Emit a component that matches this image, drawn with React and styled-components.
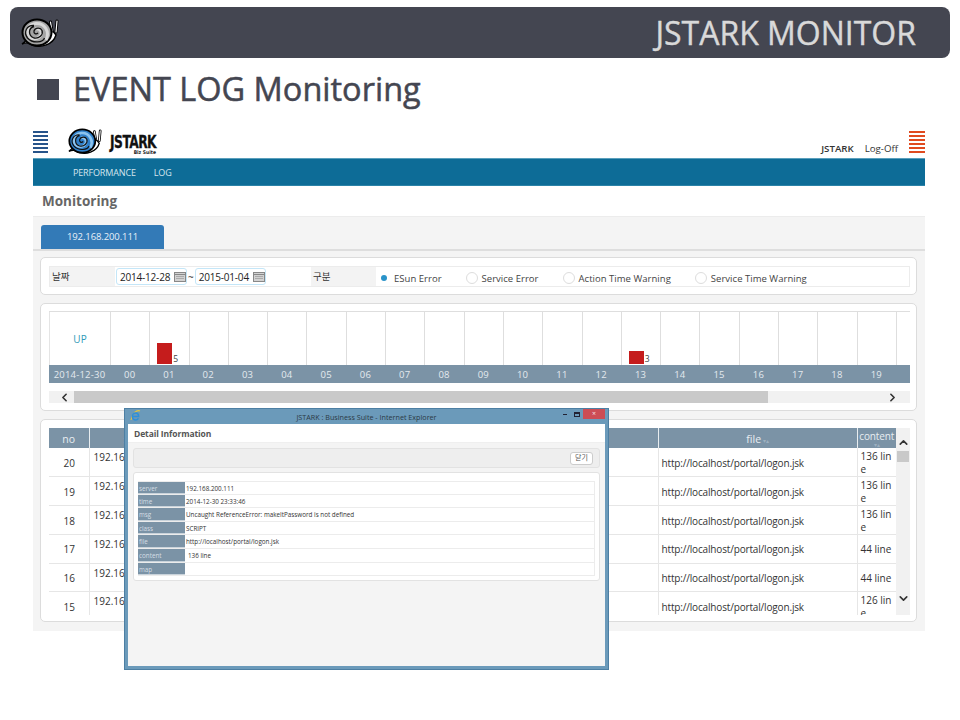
import React from "react";
import styled, { createGlobalStyle } from "styled-components";
import { ChevronLeft, ChevronRight, ChevronUp, ChevronDown } from "lucide-react";

const FONT = `"Open Sans", "Noto Sans", "Noto Sans CJK KR", sans-serif`;
const SLATE = "#7b93a6";

const GlobalStyle = createGlobalStyle`
  html, body {
    margin: 0;
    padding: 0;
    background: #fff;
    font-family: ${FONT};
  }
`;

const Page = styled.div`
  position: relative;
  width: 960px;
  height: 720px;
  overflow: hidden;
  padding-top: 7px;
  box-sizing: border-box;
`;

const TopBar = styled.header`
  margin: 0 10px;
  height: 51px;
  padding: 0 34px 0 11px;
  border-radius: 8px;
  background: #444651;
  display: flex;
  align-items: center;
  justify-content: space-between;
`;

const TopTitle = styled.div`
  color: #d9d9d9;
  font-size: 32px;
  line-height: 51px;
  -webkit-text-stroke: 0.4px #d9d9d9;
`;

const PageHeading = styled.h1`
  margin: 8px 0 0 37px;
  height: 44px;
  padding-bottom: 2px;
  display: flex;
  align-items: center;
  gap: 14px;
  color: #444651;
  font-size: 32.5px;
  font-weight: 400;
  -webkit-text-stroke: 0.5px #444651;
`;

const HeadingMark = styled.span`
  width: 22px;
  height: 21px;
  margin-top: 2px;
  background: #444651;
`;

const Frame = styled.div`
  margin: 13px 0 0 33px;
  width: 892px;
`;

const AppHeader = styled.div`
  height: 33px;
  display: flex;
  align-items: flex-start;
`;

const Burger = styled.div`
  width: ${(p) => p.$width}px;
  height: 22px;
  margin-top: 6px;
  background: repeating-linear-gradient(
    to bottom,
    ${(p) => p.$color} 0 2px,
    #fff 2px 4px
  );
`;

const Brand = styled.div`
  margin: 3px 0 0 20px;
  display: flex;
  gap: 8px;
`;

const BrandText = styled.div`
  width: 46px;
  margin-top: 5px;
  display: flex;
  flex-direction: column;
  align-items: flex-end;
`;

const BrandName = styled.span`
  align-self: flex-start;
  transform: scaleX(0.76);
  transform-origin: left center;
  font-family: "DejaVu Sans Condensed", "DejaVu Sans", sans-serif;
  font-weight: 700;
  font-size: 18px;
  line-height: 17px;
  color: #111;
  letter-spacing: -0.7px;
  white-space: nowrap;
  -webkit-text-stroke: 0.3px #111;
`;

const BrandSub = styled.span`
  font-family: "DejaVu Sans Condensed", sans-serif;
  font-weight: 700;
  font-size: 5px;
  line-height: 5px;
  color: #222;
`;

const UserArea = styled.div`
  margin: 17px 11px 0 auto;
  display: flex;
  gap: 11px;
  font-size: 9.7px;
  line-height: 14px;
  color: #333;
`;

const UserName = styled.span`
  font-weight: 600;
`;

const NavBar = styled.nav`
  height: 28px;
  box-sizing: border-box;
  padding-left: 40px;
  display: flex;
  align-items: center;
  gap: 18px;
  background: #0d6c97;
  border-top: 1px solid #5a9fbc;
  border-bottom: 1px solid #2b83a8;
  color: #d6e6ee;
  font-size: 9px;
  letter-spacing: -0.15px;
`;

const PageTitle = styled.div`
  height: 30px;
  padding-left: 9px;
  display: flex;
  align-items: center;
  color: #666;
  font-size: 13.5px;
  font-weight: 700;
`;

const Workspace = styled.main`
  height: 415px;
  box-sizing: border-box;
  background: #f4f4f4;
  border-top: 1px solid #ececec;
  padding-top: 8px;
`;

const TabStrip = styled.div`
  height: 24px;
  padding-left: 8px;
  border-bottom: 2px solid #dedede;
`;

const Tab = styled.div`
  width: 123px;
  height: 24px;
  border-radius: 3px 3px 0 0;
  background: #337ab7;
  color: #e8f0f7;
  font-size: 9.5px;
  line-height: 24px;
  text-align: center;
  letter-spacing: -0.1px;
`;

const Card = styled.section`
  width: 877px;
  height: ${(p) => p.$height}px;
  margin: ${(p) => p.$top}px 0 0 7px;
  box-sizing: border-box;
  padding: 8px 6px 0 8px;
  background: #fff;
  border: 1px solid #dcdcdc;
  border-radius: 5px;
`;

const FilterRow = styled.div`
  height: 21px;
  display: flex;
  border: 1px solid #ececec;
  box-sizing: border-box;
  align-items: stretch;
`;

const FilterLabel = styled.div`
  width: 65px;
  box-sizing: border-box;
  padding-left: 2px;
  background: #f3f3f3;
  color: #333;
  font-size: 9.5px;
  line-height: 20px;
`;

const DateCell = styled.div`
  width: 196px;
  box-sizing: border-box;
  padding-left: 1px;
  display: flex;
  align-items: center;
  gap: 1px;
  font-size: 10px;
  color: #333;
`;

const DateBox = styled.div`
  width: 71px;
  height: 17px;
  box-sizing: border-box;
  padding: 0 0 0 3px;
  display: flex;
  align-items: center;
  justify-content: space-between;
  border: 1px solid #c4e6f8;
  border-radius: 3px;
  color: #222;
  font-size: 10px;
  letter-spacing: -0.2px;
`;

const RadioGroup = styled.div`
  flex: 1;
  padding: 3px 0 0 2px;
  display: flex;
  align-items: center;
  gap: 24px;
`;

const RadioItem = styled.label`
  display: flex;
  align-items: center;
  gap: 4px;
  color: #444;
  font-size: 9.5px;
  letter-spacing: 0.03px;
`;

const RadioCircle = styled.span`
  width: 12px;
  height: 12px;
  box-sizing: border-box;
  border: 1px solid ${(p) => (p.$on ? "#fff" : "#ddd")};
  border-radius: 50%;
  display: flex;
  align-items: center;
  justify-content: center;
  &::after {
    content: "";
    display: ${(p) => (p.$on ? "block" : "none")};
    width: 6px;
    height: 6px;
    border-radius: 50%;
    background: #2a93c9;
  }
`;

const ChartGrid = styled.div`
  display: flex;
  height: 54px;
  box-sizing: border-box;
  margin-top: -1px;
  border-top: 1px solid #dedede;
  overflow: hidden;
`;

const ChartLabel = styled.div`
  width: 61px;
  flex: none;
  box-sizing: border-box;
  border-left: 1px solid #e4e4e4;
  color: #2f9ab8;
  font-size: 10px;
  line-height: 54px;
  text-align: center;
`;

const ChartCell = styled.div`
  width: 39.3px;
  flex: none;
  box-sizing: border-box;
  border-left: 1px solid #dedede;
  display: flex;
  align-items: flex-end;
  padding: 0 0 1px 7px;
  color: #444;
  font-size: 8.5px;
  line-height: 10px;
`;

const Bar = styled.span`
  width: 15px;
  height: ${(p) => p.$height}px;
  margin-right: 1px;
  background: #c51c1c;
`;

const HourBand = styled.div`
  display: flex;
  height: 18px;
  background: ${SLATE};
  color: #e4eaef;
  font-size: 9.5px;
  line-height: 20px;
  text-align: center;
  overflow: hidden;
  letter-spacing: 0.2px;
`;

const HourDate = styled.span`
  width: 61px;
  flex: none;
`;

const Hour = styled.span`
  width: 39.3px;
  flex: none;
`;

const HScroll = styled.div`
  height: 12px;
  margin-top: 8px;
  display: flex;
  align-items: center;
  background: #f1f1f1;
  color: #333;
`;

const ScrollButton = styled.span`
  width: 25px;
  flex: none;
  box-sizing: border-box;
  padding-left: ${(p) => p.$pad}px;
  display: flex;
`;

const HThumb = styled.div`
  width: 694px;
  height: 100%;
  margin-right: auto;
  background: #c9c9c9;
`;

const TableWrap = styled.div`
  display: flex;
  height: 187px;
  overflow: hidden;
`;

const LogTable = styled.table`
  width: 847px;
  flex: none;
  table-layout: fixed;
  border-collapse: collapse;
  align-self: flex-start;
  color: #333;
  font-size: 10px;
`;

const HeadCell = styled.th`
  height: 20px;
  box-sizing: border-box;
  padding: ${(p) => (p.$tight ? "2px 0 0" : "1px 0 0")};
  background: ${SLATE};
  border-left: 1px solid #e8edf0;
  color: #e8edf1;
  font-size: ${(p) => (p.$tight ? 10 : 10.5)}px;
  font-weight: 400;
  line-height: 12px;
  letter-spacing: ${(p) => (p.$tight ? "-0.1px" : "0")};
  overflow: hidden;
  &:first-child {
    border-left: 0;
  }
`;

const SortMark = styled.span`
  color: #9db0bf;
  font-size: 6px;
  line-height: 6px;
  letter-spacing: 0;
`;

const SortStack = styled(SortMark)`
  display: block;
`;

const Cell = styled.td`
  height: 28.67px;
  box-sizing: border-box;
  padding: ${(p) => (p.$top ? "3px 3px 0 4px" : "2px 2px 0 3px")};
  vertical-align: ${(p) => (p.$top ? "top" : "middle")};
  text-align: ${(p) => (p.$center ? "center" : "left")};
  border-left: ${(p) => (p.$open ? "0" : "1px solid #e6e6e6")};
  border-bottom: 1px solid #e6e6e6;
  line-height: 13px;
  letter-spacing: ${(p) => (p.$narrow ? "-0.16px" : "0")};
  word-break: break-all;
  &:first-child {
    border-left: 0;
  }
`;

const VScroll = styled.div`
  width: 14px;
  flex: none;
  display: flex;
  flex-direction: column;
  align-items: center;
  background: #f1f1f1;
  color: #333;
  padding-top: 8px;
  box-sizing: border-box;
`;

const VThumb = styled.div`
  width: 12px;
  height: 11px;
  margin: 2px 0 auto;
  background: #c9c9c9;
`;

const DownArrow = styled.span`
  display: flex;
  margin-bottom: 10px;
`;

const PopupWindow = styled.div`
  position: absolute;
  left: 124px;
  top: 408px;
  width: 485px;
  height: 262px;
  box-sizing: border-box;
  padding: 0 3px 3px;
  background: #6b9aba;
  border: 1px solid #4d7fa3;
  display: flex;
  flex-direction: column;
`;

const PopupBar = styled.div`
  position: relative;
  flex: none;
  height: 15px;
  display: flex;
  align-items: center;
  justify-content: center;
  color: #2b3a46;
  font-size: 7.2px;
`;

const PopupIcon = styled.span`
  position: absolute;
  left: 2px;
  top: 1px;
  display: flex;
`;

const WindowButtons = styled.div`
  position: absolute;
  right: 0;
  top: 0;
  height: 10px;
  display: flex;
  align-items: center;
`;

const WinMin = styled.span`
  width: 4px;
  height: 1px;
  margin-right: 7px;
  background: #223;
`;

const WinMax = styled.span`
  width: 6px;
  height: 5px;
  margin-right: 3px;
  border: 1px solid #223;
  border-top-width: 2px;
  box-sizing: border-box;
`;

const WinClose = styled.span`
  width: 22px;
  height: 10px;
  background: #cc4d55;
  color: #f6dfe0;
  font-size: 7px;
  line-height: 10px;
  text-align: center;
`;

const PopupBody = styled.div`
  flex: 1;
  background: #f4f4f4;
`;

const PopupHead = styled.div`
  height: 19px;
  box-sizing: border-box;
  padding-left: 6px;
  background: #fff;
  color: #555;
  font-size: 8.5px;
  font-weight: 700;
  line-height: 19px;
  letter-spacing: -0.1px;
  border-bottom: 1px solid #efefef;
`;

const PopupTools = styled.div`
  height: 20px;
  margin: 5px 5px 0;
  box-sizing: border-box;
  padding-right: 6px;
  display: flex;
  align-items: center;
  justify-content: flex-end;
  background: #eee;
  border: 1px solid #e2e2e2;
  border-radius: 3px;
`;

const CloseButton = styled.button`
  width: 23px;
  height: 13px;
  padding: 0;
  background: #fff;
  border: 1px solid #ccc;
  border-radius: 3px;
  color: #555;
  font-family: ${FONT};
  font-size: 7px;
  line-height: 10px;
`;

const PopupCard = styled.div`
  height: 109px;
  margin: 4px 5px 0;
  box-sizing: border-box;
  padding: 8px 4px 0;
  background: #fff;
  border: 1px solid #e2e2e2;
  border-radius: 3px;
`;

const InfoRow = styled.div`
  height: 13.6px;
  box-sizing: border-box;
  display: flex;
  border: 1px solid #ececec;
  border-top: 0;
  font-size: 6.3px;
  line-height: 13px;
  &:first-child {
    border-top: 1px solid #ececec;
  }
`;

const InfoKey = styled.div`
  width: 47px;
  flex: none;
  box-sizing: border-box;
  padding-left: 1px;
  background: ${SLATE};
  color: #d5dee5;
  border-bottom: 1px solid #c9d3db;
  margin-left: -1px;
`;

const InfoValue = styled.div`
  padding-left: ${(p) => (p.$indent ? 3 : 1)}px;
  color: #333;
`;

const Snail = ({ shell, band, width, height }) => (
  <svg width={width} height={height} viewBox="0 0 38 30">
    <path
      d="M1 26 C6 24 8 25 11 27 C20 30 32 27 35 17 L31 12 L8 20 Z"
      fill="#fff"
      stroke="#000"
      strokeWidth="1.4"
    />
    <path d="M31 13 L29.5 4 M35 14 L36 3" stroke="#000" strokeWidth="3" strokeLinecap="round" />
    <path d="M31 13 L29.5 4 M35 14 L36 3" stroke="#fff" strokeWidth="1.2" strokeLinecap="round" />
    <ellipse cx="16" cy="14.5" rx="14.5" ry="13" fill={shell} stroke="#000" strokeWidth="2" />
    <path
      d="M25 22 C29 14 24 5 15 5.5 C8 6 5 12 7.5 17 C10 22 18 22 20 16.5 C21 13 18 10 14.5 11"
      fill="none"
      stroke={band}
      strokeWidth="3"
    />
    <path
      d="M23.5 20 C22 24.5 12 26 6.5 20 C2 14 6 7 13 7.5 M13 8.5 C7 10 7 18 13 20 C18 21 22.5 17 21 12.5 C19.5 9 14 9.5 13 13 C12.5 15.5 15 17 17 15"
      fill="none"
      stroke="#111"
      strokeWidth="1.3"
    />
  </svg>
);

const CalendarIcon = () => (
  <svg width="12" height="10" viewBox="0 0 12 10">
    <rect x="0.5" y="0.5" width="11" height="9" fill="#d2d2d2" stroke="#888" />
    <path d="M1 2.5 H11" stroke="#888" />
    <path d="M2 4.5 H10 M2 6.5 H10" stroke="#aaa" />
  </svg>
);

const IeIcon = () => (
  <svg width="11" height="12" viewBox="0 0 11 12">
    <path d="M10 1 C7 -0.5 2 3 1 10" fill="none" stroke="#e6c53c" strokeWidth="1.1" />
    <path
      d="M2.8 6.5 H8.6 C8.6 4 7 3 5.6 3 C3.8 3 2.4 4.6 2.4 6.5 C2.4 8.6 4 10 5.6 10 C6.8 10 7.8 9.4 8.4 8.4"
      fill="none"
      stroke="#2f8fd8"
      strokeWidth="1.5"
    />
  </svg>
);

const hours = Array.from({ length: 20 }, (_, i) => String(i).padStart(2, "0"));
const bars = { 1: { height: 21, count: 5 }, 13: { height: 13, count: 3 } };

const radios = [
  { label: "ESun Error", on: true },
  { label: "Service Error" },
  { label: "Action Time Warning" },
  { label: "Service Time Warning" },
];

const logs = [
  { no: 20, content: "136 line" },
  { no: 19, content: "136 line" },
  { no: 18, content: "136 line" },
  { no: 17, content: "44 line" },
  { no: 16, content: "44 line" },
  { no: 15, content: "126 line" },
];

const details = [
  ["server", "192.168.200.111"],
  ["time", "2014-12-30 23:33:46"],
  ["msg", "Uncaught ReferenceError: makeItPassword is not defined"],
  ["class", "SCRIPT"],
  ["file", "http://localhost/portal/logon.jsk"],
  ["content", "136 line", true],
  ["map", ""],
];

export default function App() {
  return (
    <Page>
      <GlobalStyle />
      <TopBar>
        <Snail shell="#a4a4a4" band="#d8d8d8" width={38} height={30} />
        <TopTitle>JSTARK MONITOR</TopTitle>
      </TopBar>
      <PageHeading>
        <HeadingMark />
        EVENT LOG Monitoring
      </PageHeading>

      <Frame>
        <AppHeader>
          <Burger $color="#27548a" $width={15} />
          <Brand>
            <Snail shell="#2f7fc9" band="#8cc3ee" width={34} height={27} />
            <BrandText>
              <BrandName>JSTARK</BrandName>
              <BrandSub>Biz Suite</BrandSub>
            </BrandText>
          </Brand>
          <UserArea>
            <UserName>JSTARK</UserName>
            <span>Log-Off</span>
          </UserArea>
          <Burger $color="#e04a1f" $width={16} />
        </AppHeader>
        <NavBar>
          <span>PERFORMANCE</span>
          <span>LOG</span>
        </NavBar>
        <PageTitle>Monitoring</PageTitle>

        <Workspace>
          <TabStrip>
            <Tab>192.168.200.111</Tab>
          </TabStrip>

          <Card $height={38} $top={6}>
            <FilterRow>
              <FilterLabel>날짜</FilterLabel>
              <DateCell>
                <DateBox>
                  2014-12-28 <CalendarIcon />
                </DateBox>
                ~
                <DateBox>
                  2015-01-04 <CalendarIcon />
                </DateBox>
              </DateCell>
              <FilterLabel>구분</FilterLabel>
              <RadioGroup>
                {radios.map((r) => (
                  <RadioItem key={r.label}>
                    <RadioCircle $on={r.on} />
                    {r.label}
                  </RadioItem>
                ))}
              </RadioGroup>
            </FilterRow>
          </Card>

          <Card $height={108} $top={8}>
            <ChartGrid>
              <ChartLabel>UP</ChartLabel>
              {[...hours, "20"].map((h, i) => (
                <ChartCell key={h}>
                  {bars[i] && (
                    <>
                      <Bar $height={bars[i].height} />
                      {bars[i].count}
                    </>
                  )}
                </ChartCell>
              ))}
            </ChartGrid>
            <HourBand>
              <HourDate>2014-12-30</HourDate>
              {hours.map((h) => (
                <Hour key={h}>{h}</Hour>
              ))}
            </HourBand>
            <HScroll>
              <ScrollButton $pad={9}>
                <ChevronLeft size={13} strokeWidth={3} />
              </ScrollButton>
              <HThumb />
              <ScrollButton $pad={1}>
                <ChevronRight size={13} strokeWidth={3} />
              </ScrollButton>
            </HScroll>
          </Card>

          <Card $height={203} $top={8}>
            <TableWrap>
              <LogTable>
                <colgroup>
                  <col width="40" />
                  <col width="100" />
                  <col width="120" />
                  <col width="349" />
                  <col width="199" />
                  <col width="39" />
                </colgroup>
                <thead>
                  <tr>
                    <HeadCell>no</HeadCell>
                    <HeadCell>server</HeadCell>
                    <HeadCell>time</HeadCell>
                    <HeadCell>msg</HeadCell>
                    <HeadCell>
                      file
                      <SortMark> ▾▴</SortMark>
                    </HeadCell>
                    <HeadCell $tight>
                      content
                      <SortStack>▾▴</SortStack>
                    </HeadCell>
                  </tr>
                </thead>
                <tbody>
                  {logs.map((log) => (
                    <tr key={log.no}>
                      <Cell $center>{log.no}</Cell>
                      <Cell $top>192.168.200.111</Cell>
                      <Cell>2014-12-30 23:33:46</Cell>
                      <Cell $open>Uncaught ReferenceError: makeItPassword is not defined</Cell>
                      <Cell $narrow>http://localhost/portal/logon.jsk</Cell>
                      <Cell>{log.content}</Cell>
                    </tr>
                  ))}
                </tbody>
              </LogTable>
              <VScroll>
                <ChevronUp size={13} strokeWidth={3} />
                <VThumb />
                <DownArrow>
                  <ChevronDown size={13} strokeWidth={3} />
                </DownArrow>
              </VScroll>
            </TableWrap>
          </Card>
        </Workspace>
      </Frame>

      <PopupWindow>
        <PopupBar>
          <PopupIcon>
            <IeIcon />
          </PopupIcon>
          JSTARK : Business Suite - Internet Explorer
          <WindowButtons>
            <WinMin />
            <WinMax />
            <WinClose>×</WinClose>
          </WindowButtons>
        </PopupBar>
        <PopupBody>
          <PopupHead>Detail Information</PopupHead>
          <PopupTools>
            <CloseButton>닫기</CloseButton>
          </PopupTools>
          <PopupCard>
            {details.map(([key, value, indent]) => (
              <InfoRow key={key}>
                <InfoKey>{key}</InfoKey>
                <InfoValue $indent={indent}>{value}</InfoValue>
              </InfoRow>
            ))}
          </PopupCard>
        </PopupBody>
      </PopupWindow>
    </Page>
  );
}
